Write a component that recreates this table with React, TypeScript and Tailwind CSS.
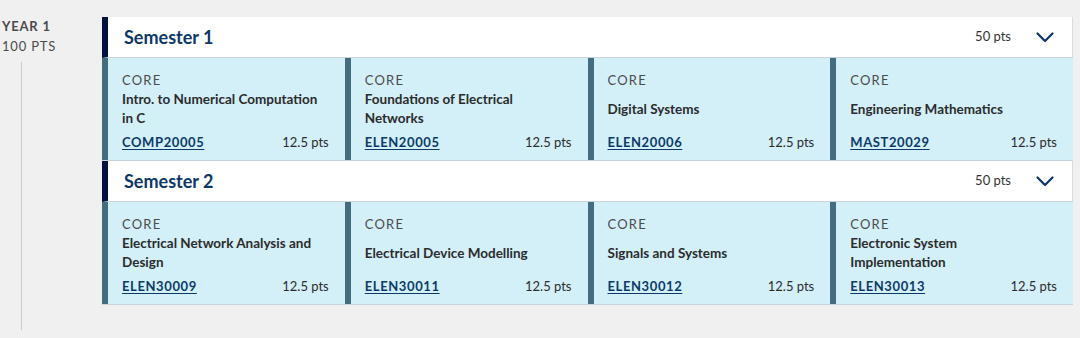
type Subject = {
  title: string;
  code: string;
};

const semesters: { name: string; pts: string; subjects: Subject[] }[] = [
  {
    name: "Semester 1",
    pts: "50 pts",
    subjects: [
      { title: "Intro. to Numerical Computation in C", code: "COMP20005" },
      { title: "Foundations of Electrical Networks", code: "ELEN20005" },
      { title: "Digital Systems", code: "ELEN20006" },
      { title: "Engineering Mathematics", code: "MAST20029" },
    ],
  },
  {
    name: "Semester 2",
    pts: "50 pts",
    subjects: [
      { title: "Electrical Network Analysis and Design", code: "ELEN30009" },
      { title: "Electrical Device Modelling", code: "ELEN30011" },
      { title: "Signals and Systems", code: "ELEN30012" },
      { title: "Electronic System Implementation", code: "ELEN30013" },
    ],
  },
];

function SubjectCard({ subject }: { subject: Subject }) {
  return (
    <div className="flex h-[102px] flex-col border-l-[6px] border-[#436d7f] bg-[#d3f0f9] pb-[8px] pl-[14px] pr-[16px] pt-[14px]">
      <p className="text-[13px] leading-[16px] tracking-[1.2px] text-[#4b4b4b]">CORE</p>
      <div className="flex flex-1 items-center pb-[2px]">
        <p className="max-w-[200px] text-[13.5px] font-bold leading-[19px] text-[#2b2b2b]">{subject.title}</p>
      </div>
      <div className="flex items-center justify-between">
        <a href="#" className="text-[13px] font-bold leading-[20px] tracking-[0.6px] text-[#0b3a68] underline underline-offset-2">
          {subject.code}
        </a>
        <span className="text-[13px] leading-[20px] text-[#2b2b2b]">12.5 pts</span>
      </div>
    </div>
  );
}

export default function App() {
  return (
    <div className="flex h-[338px] w-[1080px] bg-[#f0f0f0] font-['Lato','Liberation_Sans',sans-serif]">
      <div className="flex w-[102px] flex-col pl-[2px] pt-[17px]">
        <p className="text-[13px] font-bold leading-[19px] tracking-[0.8px] text-[#4a4a4a]">YEAR 1</p>
        <p className="text-[13px] leading-[20px] tracking-[0.8px] text-[#4a4a4a]">100 PTS</p>
        <div className="ml-[19px] mt-[6px] h-[268px] w-px bg-[#c5ccd2]" />
      </div>
      <div className="mt-[17px] flex w-[971px] flex-col self-start">
        {semesters.map((sem) => (
          <div key={sem.name} className="flex flex-col">
            <div className="flex h-[41px] items-center justify-between border-b border-l-[6px] border-b-[#c9d3d9] border-l-[#00133f] border-r border-r-[#d9dde0] bg-white pl-[16px] pr-[18px]">
              <h2 className="text-[18px] font-bold text-[#0d3766]">{sem.name}</h2>
              <div className="flex items-center gap-[25px]">
                <span className="text-[13px] text-[#333333]">{sem.pts}</span>
                <svg width="18" height="11" viewBox="0 0 18 11" fill="none" className="text-[#0d3766]">
                  <polyline points="1.5,1.5 9,9 16.5,1.5" stroke="currentColor" strokeWidth="2.2" strokeLinecap="round" strokeLinejoin="round" />
                </svg>
              </div>
            </div>
            <div className="grid grid-cols-4 border-b border-[#c9d3d9]">
              {sem.subjects.map((s) => (
                <SubjectCard key={s.code} subject={s} />
              ))}
            </div>
          </div>
        ))}
      </div>
    </div>
  );
}
